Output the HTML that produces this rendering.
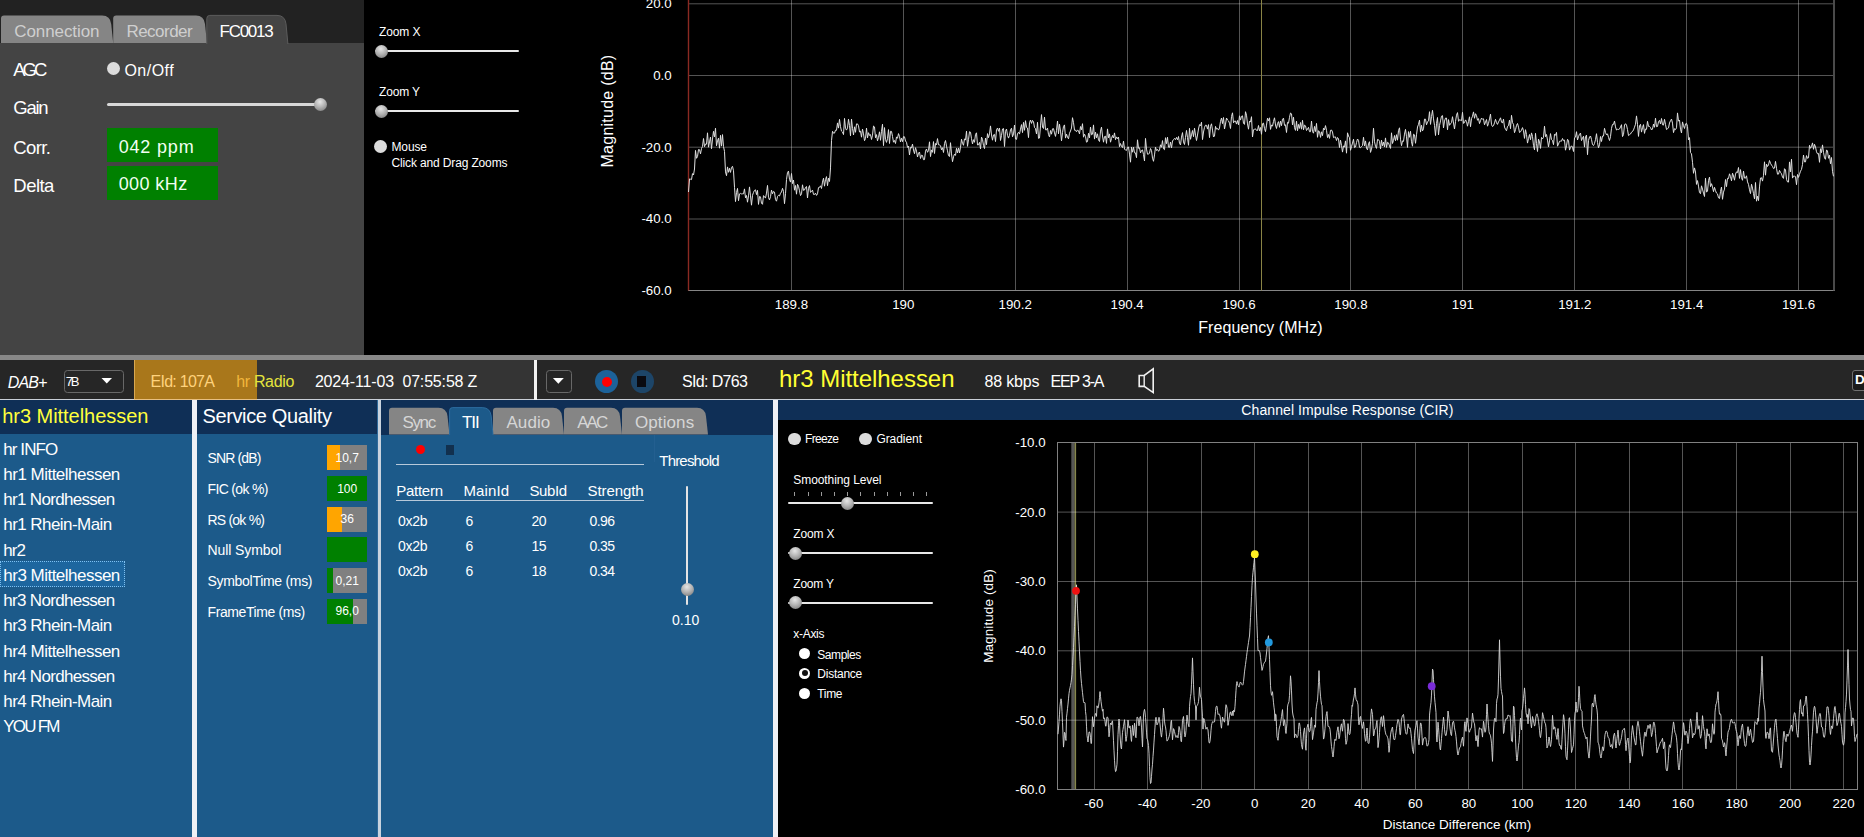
<!DOCTYPE html>
<html><head><meta charset="utf-8"><title>DAB Radio</title>
<style>
html,body{margin:0;padding:0;background:#000;}
html{overflow:hidden;width:1864px;height:837px;}
body{width:1864px;height:837px;position:relative;overflow:hidden;font-family:"Liberation Sans",sans-serif;}
#r{position:absolute;left:0;top:0;width:1864px;height:837px;overflow:hidden;background:#000;}
#r>div,#r>span,#r>svg{position:absolute;display:block;}
#r>span{white-space:nowrap;}
.dot{border-radius:50%;background:#dcdcdc;}
.thumb{border-radius:50%;background:radial-gradient(circle at 45% 30%,#e6e6e6 0%,#b4b4b4 45%,#6e6e6e 100%);}
</style></head><body><div id="r">
<div style="left:0px;top:0px;width:364px;height:43px;background:#222222;"></div>
<div style="left:0px;top:43px;width:364px;height:312px;background:#444444;"></div>
<svg style="left:0;top:10px" width="760" height="36" viewBox="0 10 760 36"><path d="M1 43 L1 18.6 Q1 15.6 4 15.6 L102.2 15.6 Q110.2 15.6 111.2 24.1 L113.2 43 Z" fill="#858585"/><path d="M113.2 43 L113.2 18.6 Q113.2 15.6 116.2 15.6 L196 15.6 Q204 15.6 205 24.1 L207 43 Z" fill="#858585"/><path d="M206.8 45 L206.8 18.4 Q206.8 15.4 209.8 15.4 L277 15.4 Q285 15.4 286 23.9 L288 45 Z" fill="#444444" stroke="#5c5c5c" stroke-width="1"/></svg>
<div style="left:206px;top:43.6px;width:83px;height:2px;background:#444444;"></div>
<span style="left:14.3px;top:20.60px;font-size:17px;line-height:22px;color:#cfcfcf;letter-spacing:-0.090px;">Connection</span>
<span style="left:126.4px;top:20.60px;font-size:17px;line-height:22px;color:#cfcfcf;letter-spacing:-0.517px;">Recorder</span>
<span style="left:219.6px;top:20.60px;font-size:17px;line-height:22px;color:#ffffff;letter-spacing:-1.296px;">FC0013</span>
<span style="left:13.3px;top:57.80px;font-size:18.5px;line-height:24px;color:#fff;letter-spacing:-3.045px;">AGC</span>
<div class="dot" style="left:107px;top:62px;width:13px;height:13px;"></div>
<span style="left:124.4px;top:60.10px;font-size:16px;line-height:21px;color:#fff;letter-spacing:0.493px;">On/Off</span>
<span style="left:13.3px;top:96.40px;font-size:18.5px;line-height:24px;color:#fff;letter-spacing:-1.293px;">Gain</span>
<div style="left:107px;top:103px;width:210px;height:3px;background:#d8d8d8;border-radius:2px;"></div>
<div class="thumb" style="left:313.5px;top:98px;width:13px;height:13px;"></div>
<span style="left:13.3px;top:135.60px;font-size:18.5px;line-height:24px;color:#fff;letter-spacing:-0.598px;">Corr.</span>
<div style="left:107px;top:128px;width:111px;height:34px;background:#008000;"></div>
<span style="left:118.7px;top:135.50px;font-size:18px;line-height:23px;color:#f2fff2;letter-spacing:0.825px;">042 ppm</span>
<span style="left:13.3px;top:173.60px;font-size:18.5px;line-height:24px;color:#fff;letter-spacing:-0.522px;">Delta</span>
<div style="left:107px;top:166px;width:111px;height:34px;background:#008000;"></div>
<span style="left:118.7px;top:173.30px;font-size:18px;line-height:23px;color:#f2fff2;letter-spacing:0.411px;">000 kHz</span>
<span style="left:379px;top:23.60px;font-size:12px;line-height:16px;color:#fff;letter-spacing:-0.103px;">Zoom X</span>
<div style="left:375px;top:50px;width:144px;height:2px;background:#e8e8e8;border-radius:1px;"></div>
<div class="thumb" style="left:374.5px;top:44.5px;width:13px;height:13px;"></div>
<span style="left:379px;top:83.80px;font-size:12px;line-height:16px;color:#fff;letter-spacing:-0.159px;">Zoom Y</span>
<div style="left:375px;top:110px;width:144px;height:2px;background:#e8e8e8;border-radius:1px;"></div>
<div class="thumb" style="left:374.5px;top:104.5px;width:13px;height:13px;"></div>
<div class="dot" style="left:374px;top:139.5px;width:13px;height:13px;"></div>
<span style="left:391.5px;top:139.00px;font-size:12px;line-height:16px;color:#fff;letter-spacing:-0.130px;">Mouse</span>
<span style="left:391.5px;top:155.30px;font-size:12px;line-height:16px;color:#fff;letter-spacing:-0.143px;">Click and Drag Zooms</span>
<svg style="left:0;top:0" width="1864" height="356" viewBox="0 0 1864 356">
<line x1="688" x2="1834.5" y1="3.8" y2="3.8" stroke="#ffffff" stroke-opacity="0.33" stroke-width="1"/>
<line x1="688" x2="1834.5" y1="75.5" y2="75.5" stroke="#ffffff" stroke-opacity="0.33" stroke-width="1"/>
<line x1="688" x2="1834.5" y1="147.2" y2="147.2" stroke="#ffffff" stroke-opacity="0.33" stroke-width="1"/>
<line x1="688" x2="1834.5" y1="219.0" y2="219.0" stroke="#ffffff" stroke-opacity="0.33" stroke-width="1"/>
<line x1="791.5" x2="791.5" y1="0" y2="290.3" stroke="#ffffff" stroke-opacity="0.33" stroke-width="1"/>
<line x1="903.5" x2="903.5" y1="0" y2="290.3" stroke="#ffffff" stroke-opacity="0.33" stroke-width="1"/>
<line x1="1015.5" x2="1015.5" y1="0" y2="290.3" stroke="#ffffff" stroke-opacity="0.33" stroke-width="1"/>
<line x1="1127.5" x2="1127.5" y1="0" y2="290.3" stroke="#ffffff" stroke-opacity="0.33" stroke-width="1"/>
<line x1="1239.5" x2="1239.5" y1="0" y2="290.3" stroke="#ffffff" stroke-opacity="0.33" stroke-width="1"/>
<line x1="1350.5" x2="1350.5" y1="0" y2="290.3" stroke="#ffffff" stroke-opacity="0.33" stroke-width="1"/>
<line x1="1462.5" x2="1462.5" y1="0" y2="290.3" stroke="#ffffff" stroke-opacity="0.33" stroke-width="1"/>
<line x1="1574.5" x2="1574.5" y1="0" y2="290.3" stroke="#ffffff" stroke-opacity="0.33" stroke-width="1"/>
<line x1="1686.5" x2="1686.5" y1="0" y2="290.3" stroke="#ffffff" stroke-opacity="0.33" stroke-width="1"/>
<line x1="1798.5" x2="1798.5" y1="0" y2="290.3" stroke="#ffffff" stroke-opacity="0.33" stroke-width="1"/>
<line x1="688" x2="1835.0" y1="290.5" y2="290.5" stroke="#858585" stroke-width="1"/>
<line x1="1834" x2="1834" y1="0" y2="290.5" stroke="#4a4a4a" stroke-width="2"/>
<line x1="688.5" x2="688.5" y1="0" y2="290.5" stroke="#8a2a22" stroke-width="1.4"/>
<line x1="1261.5" x2="1261.5" y1="0" y2="290.5" stroke="#8a8446" stroke-width="1"/>
<polyline points="688.5,192.0 689.5,178.9 690.5,179.2 691.5,179.6 692.5,173.6 693.5,175.0 694.5,169.0 695.5,150.4 696.5,158.3 697.5,156.6 698.5,149.5 699.5,149.7 700.5,153.9 701.5,148.5 702.5,146.5 703.5,138.5 704.5,146.7 705.5,144.0 706.5,144.2 707.5,132.8 708.5,147.2 709.5,141.9 710.5,137.0 711.5,148.7 712.5,139.1 713.5,131.3 714.5,136.9 715.5,128.2 716.5,145.8 717.5,140.8 718.5,138.1 719.5,148.2 720.5,135.3 721.5,146.1 722.5,134.6 723.5,146.5 724.5,151.4 725.5,171.9 726.5,175.7 727.5,166.9 728.5,172.3 729.5,168.3 730.5,172.4 731.5,167.4 732.5,166.3 733.5,170.8 734.5,187.3 735.5,201.6 736.5,192.6 737.5,188.4 738.5,200.7 739.5,193.9 740.5,193.4 741.5,193.9 742.5,193.8 743.5,193.8 744.5,188.9 745.5,197.9 746.5,195.5 747.5,202.2 748.5,195.9 749.5,186.9 750.5,195.9 751.5,205.2 752.5,195.3 753.5,192.4 754.5,190.4 755.5,189.8 756.5,194.6 757.5,190.4 758.5,204.4 759.5,196.5 760.5,196.8 761.5,203.3 762.5,204.3 763.5,195.6 764.5,196.8 765.5,198.1 766.5,193.1 767.5,185.4 768.5,197.6 769.5,199.9 770.5,196.7 771.5,190.1 772.5,193.8 773.5,191.4 774.5,192.1 775.5,199.6 776.5,201.2 777.5,196.5 778.5,195.3 779.5,196.0 780.5,193.2 781.5,192.0 782.5,188.3 783.5,191.4 784.5,203.7 785.5,193.7 786.5,179.5 787.5,172.4 788.5,171.1 789.5,179.4 790.5,182.1 791.5,173.5 792.5,183.6 793.5,180.0 794.5,190.2 795.5,185.5 796.5,194.2 797.5,184.3 798.5,186.3 799.5,190.8 800.5,195.6 801.5,193.8 802.5,184.8 803.5,190.4 804.5,190.0 805.5,187.4 806.5,186.5 807.5,198.0 808.5,188.3 809.5,185.6 810.5,192.4 811.5,191.5 812.5,190.1 813.5,194.4 814.5,194.5 815.5,193.1 816.5,195.4 817.5,193.8 818.5,187.6 819.5,187.4 820.5,185.8 821.5,188.5 822.5,182.1 823.5,178.2 824.5,186.2 825.5,179.7 826.5,176.6 827.5,185.7 828.5,178.1 829.5,181.5 830.5,167.9 831.5,140.6 832.5,131.3 833.5,133.2 834.5,133.1 835.5,130.2 836.5,130.3 837.5,122.9 838.5,128.1 839.5,119.4 840.5,126.7 841.5,131.1 842.5,132.0 843.5,134.6 844.5,118.4 845.5,128.4 846.5,130.1 847.5,127.9 848.5,119.2 849.5,125.5 850.5,135.8 851.5,119.0 852.5,128.4 853.5,135.0 854.5,126.8 855.5,132.3 856.5,123.9 857.5,123.9 858.5,125.8 859.5,132.0 860.5,131.1 861.5,137.2 862.5,129.1 863.5,133.9 864.5,140.7 865.5,138.5 866.5,128.1 867.5,137.9 868.5,132.7 869.5,135.4 870.5,134.6 871.5,139.5 872.5,135.2 873.5,126.0 874.5,126.9 875.5,137.8 876.5,134.6 877.5,140.9 878.5,137.3 879.5,131.8 880.5,140.3 881.5,131.3 882.5,124.2 883.5,145.6 884.5,127.6 885.5,139.4 886.5,142.4 887.5,138.6 888.5,129.6 889.5,143.5 890.5,131.3 891.5,131.4 892.5,136.4 893.5,142.2 894.5,140.5 895.5,143.5 896.5,136.9 897.5,138.3 898.5,133.6 899.5,136.5 900.5,142.0 901.5,138.1 902.5,141.7 903.5,136.6 904.5,136.8 905.5,141.0 906.5,142.3 907.5,147.4 908.5,146.0 909.5,155.0 910.5,147.3 911.5,148.0 912.5,144.1 913.5,150.0 914.5,153.7 915.5,147.7 916.5,151.1 917.5,157.0 918.5,153.1 919.5,152.0 920.5,158.5 921.5,155.2 922.5,155.5 923.5,159.7 924.5,159.6 925.5,151.2 926.5,149.0 927.5,152.3 928.5,150.5 929.5,141.8 930.5,156.6 931.5,149.9 932.5,152.3 933.5,141.6 934.5,153.5 935.5,143.5 936.5,144.9 937.5,138.6 938.5,144.8 939.5,145.0 940.5,145.7 941.5,149.9 942.5,147.7 943.5,152.5 944.5,143.5 945.5,140.5 946.5,146.2 947.5,150.8 948.5,155.7 949.5,156.5 950.5,142.7 951.5,153.9 952.5,161.7 953.5,156.8 954.5,154.1 955.5,155.4 956.5,148.3 957.5,152.9 958.5,148.0 959.5,152.9 960.5,147.2 961.5,139.2 962.5,143.3 963.5,145.3 964.5,138.8 965.5,140.1 966.5,131.1 967.5,146.3 968.5,139.7 969.5,131.7 970.5,132.2 971.5,138.7 972.5,144.0 973.5,139.7 974.5,142.3 975.5,134.4 976.5,132.8 977.5,145.0 978.5,144.8 979.5,142.4 980.5,149.0 981.5,137.1 982.5,139.3 983.5,145.6 984.5,148.6 985.5,138.0 986.5,144.7 987.5,133.6 988.5,137.7 989.5,133.9 990.5,125.9 991.5,135.0 992.5,140.2 993.5,134.9 994.5,134.4 995.5,141.6 996.5,129.7 997.5,128.1 998.5,131.3 999.5,128.0 1000.5,140.5 1001.5,135.4 1002.5,129.0 1003.5,128.5 1004.5,146.5 1005.5,131.3 1006.5,129.0 1007.5,135.3 1008.5,138.1 1009.5,135.3 1010.5,129.9 1011.5,128.2 1012.5,136.8 1013.5,133.9 1014.5,125.0 1015.5,139.0 1016.5,139.4 1017.5,133.5 1018.5,132.3 1019.5,134.1 1020.5,129.1 1021.5,124.6 1022.5,132.6 1023.5,122.4 1024.5,130.3 1025.5,120.7 1026.5,127.4 1027.5,128.0 1028.5,137.6 1029.5,122.8 1030.5,120.0 1031.5,123.4 1032.5,120.4 1033.5,121.8 1034.5,127.5 1035.5,128.6 1036.5,133.9 1037.5,122.3 1038.5,138.4 1039.5,138.0 1040.5,125.9 1041.5,114.6 1042.5,127.0 1043.5,128.5 1044.5,117.1 1045.5,129.8 1046.5,130.0 1047.5,128.0 1048.5,134.6 1049.5,136.9 1050.5,130.5 1051.5,134.2 1052.5,128.8 1053.5,128.6 1054.5,132.9 1055.5,136.4 1056.5,130.5 1057.5,121.0 1058.5,133.8 1059.5,124.2 1060.5,131.1 1061.5,140.8 1062.5,132.7 1063.5,126.4 1064.5,124.9 1065.5,138.1 1066.5,134.1 1067.5,137.1 1068.5,138.8 1069.5,133.3 1070.5,131.0 1071.5,128.0 1072.5,117.7 1073.5,122.7 1074.5,130.2 1075.5,130.2 1076.5,131.8 1077.5,129.9 1078.5,130.9 1079.5,133.9 1080.5,126.5 1081.5,129.8 1082.5,123.7 1083.5,137.2 1084.5,134.2 1085.5,136.4 1086.5,142.2 1087.5,141.6 1088.5,133.3 1089.5,137.9 1090.5,127.0 1091.5,134.8 1092.5,134.2 1093.5,124.9 1094.5,139.1 1095.5,132.1 1096.5,137.8 1097.5,133.8 1098.5,139.9 1099.5,141.5 1100.5,131.1 1101.5,127.1 1102.5,136.0 1103.5,142.2 1104.5,136.6 1105.5,136.2 1106.5,143.4 1107.5,128.9 1108.5,137.8 1109.5,133.9 1110.5,142.2 1111.5,138.5 1112.5,135.4 1113.5,138.0 1114.5,132.9 1115.5,139.7 1116.5,136.9 1117.5,138.7 1118.5,137.0 1119.5,146.7 1120.5,143.5 1121.5,146.5 1122.5,147.6 1123.5,141.1 1124.5,149.3 1125.5,149.9 1126.5,150.4 1127.5,147.5 1128.5,147.0 1129.5,154.1 1130.5,162.2 1131.5,147.1 1132.5,152.2 1133.5,147.2 1134.5,152.8 1135.5,152.9 1136.5,157.7 1137.5,139.8 1138.5,148.3 1139.5,147.8 1140.5,152.9 1141.5,150.5 1142.5,149.9 1143.5,154.5 1144.5,161.0 1145.5,138.4 1146.5,149.1 1147.5,154.2 1148.5,154.2 1149.5,153.0 1150.5,148.5 1151.5,150.5 1152.5,158.2 1153.5,161.3 1154.5,154.9 1155.5,147.2 1156.5,150.5 1157.5,149.4 1158.5,151.3 1159.5,149.9 1160.5,144.8 1161.5,147.3 1162.5,140.6 1163.5,148.8 1164.5,149.7 1165.5,137.7 1166.5,143.7 1167.5,137.2 1168.5,147.2 1169.5,147.4 1170.5,142.0 1171.5,147.9 1172.5,141.0 1173.5,139.7 1174.5,138.4 1175.5,139.6 1176.5,137.4 1177.5,139.8 1178.5,136.5 1179.5,143.4 1180.5,144.9 1181.5,137.1 1182.5,132.6 1183.5,141.9 1184.5,144.5 1185.5,137.3 1186.5,130.4 1187.5,137.5 1188.5,145.3 1189.5,128.3 1190.5,139.3 1191.5,134.9 1192.5,130.5 1193.5,136.7 1194.5,128.2 1195.5,135.2 1196.5,140.5 1197.5,135.0 1198.5,129.0 1199.5,124.6 1200.5,125.8 1201.5,122.2 1202.5,139.6 1203.5,132.0 1204.5,127.3 1205.5,125.2 1206.5,125.3 1207.5,129.1 1208.5,124.6 1209.5,137.6 1210.5,126.5 1211.5,123.8 1212.5,130.1 1213.5,137.0 1214.5,136.0 1215.5,126.4 1216.5,129.1 1217.5,128.5 1218.5,130.1 1219.5,128.0 1220.5,121.3 1221.5,118.0 1222.5,123.6 1223.5,117.5 1224.5,129.0 1225.5,124.1 1226.5,118.0 1227.5,120.0 1228.5,120.9 1229.5,123.2 1230.5,128.5 1231.5,116.5 1232.5,112.8 1233.5,122.8 1234.5,121.1 1235.5,121.0 1236.5,124.1 1237.5,120.5 1238.5,124.8 1239.5,115.8 1240.5,120.1 1241.5,116.3 1242.5,115.8 1243.5,123.3 1244.5,124.4 1245.5,111.7 1246.5,115.2 1247.5,123.9 1248.5,129.2 1249.5,121.1 1250.5,122.1 1251.5,116.7 1252.5,137.0 1253.5,129.7 1254.5,129.3 1255.5,128.8 1256.5,130.4 1257.5,130.5 1258.5,125.5 1259.5,131.0 1260.5,127.5 1261.5,134.3 1262.5,123.7 1263.5,123.1 1264.5,128.4 1265.5,131.7 1266.5,125.1 1267.5,118.2 1268.5,120.9 1269.5,117.8 1270.5,129.4 1271.5,124.9 1272.5,126.2 1273.5,121.4 1274.5,117.8 1275.5,125.0 1276.5,128.5 1277.5,123.6 1278.5,121.6 1279.5,127.3 1280.5,121.1 1281.5,125.7 1282.5,119.2 1283.5,118.2 1284.5,125.4 1285.5,124.8 1286.5,132.5 1287.5,122.3 1288.5,123.2 1289.5,117.3 1290.5,113.0 1291.5,113.8 1292.5,124.9 1293.5,117.2 1294.5,127.6 1295.5,130.4 1296.5,121.2 1297.5,130.8 1298.5,124.4 1299.5,128.4 1300.5,122.5 1301.5,129.2 1302.5,120.3 1303.5,129.9 1304.5,125.1 1305.5,125.8 1306.5,130.5 1307.5,129.1 1308.5,127.3 1309.5,131.7 1310.5,131.7 1311.5,121.0 1312.5,131.5 1313.5,133.2 1314.5,126.4 1315.5,131.5 1316.5,123.4 1317.5,137.3 1318.5,130.8 1319.5,131.6 1320.5,137.4 1321.5,131.8 1322.5,135.7 1323.5,128.2 1324.5,129.9 1325.5,125.6 1326.5,130.3 1327.5,137.6 1328.5,134.5 1329.5,138.4 1330.5,130.3 1331.5,130.0 1332.5,132.0 1333.5,137.6 1334.5,137.1 1335.5,136.9 1336.5,140.5 1337.5,137.5 1338.5,138.8 1339.5,147.5 1340.5,140.2 1341.5,145.4 1342.5,152.1 1343.5,145.8 1344.5,147.2 1345.5,140.9 1346.5,153.2 1347.5,132.8 1348.5,136.0 1349.5,137.8 1350.5,150.3 1351.5,146.6 1352.5,143.1 1353.5,139.2 1354.5,147.6 1355.5,147.0 1356.5,142.5 1357.5,139.0 1358.5,140.3 1359.5,147.3 1360.5,147.7 1361.5,146.5 1362.5,145.5 1363.5,137.2 1364.5,146.0 1365.5,140.9 1366.5,148.1 1367.5,149.9 1368.5,143.9 1369.5,141.7 1370.5,152.4 1371.5,149.1 1372.5,143.3 1373.5,128.2 1374.5,141.8 1375.5,146.3 1376.5,148.4 1377.5,139.4 1378.5,139.7 1379.5,141.3 1380.5,148.9 1381.5,140.2 1382.5,145.8 1383.5,142.1 1384.5,146.8 1385.5,137.9 1386.5,147.4 1387.5,142.3 1388.5,142.9 1389.5,146.0 1390.5,148.4 1391.5,132.8 1392.5,143.5 1393.5,140.4 1394.5,135.5 1395.5,140.7 1396.5,134.7 1397.5,140.2 1398.5,130.6 1399.5,127.8 1400.5,139.2 1401.5,145.7 1402.5,140.9 1403.5,141.4 1404.5,134.1 1405.5,129.4 1406.5,136.8 1407.5,147.4 1408.5,131.6 1409.5,137.3 1410.5,131.3 1411.5,141.8 1412.5,146.2 1413.5,134.2 1414.5,134.8 1415.5,143.3 1416.5,134.8 1417.5,127.0 1418.5,124.3 1419.5,120.1 1420.5,132.1 1421.5,125.2 1422.5,130.9 1423.5,128.8 1424.5,119.1 1425.5,119.2 1426.5,124.8 1427.5,121.9 1428.5,120.9 1429.5,111.7 1430.5,124.4 1431.5,116.6 1432.5,110.3 1433.5,118.9 1434.5,125.4 1435.5,135.5 1436.5,123.6 1437.5,117.5 1438.5,134.9 1439.5,125.6 1440.5,120.9 1441.5,116.2 1442.5,115.6 1443.5,127.9 1444.5,121.1 1445.5,118.1 1446.5,118.0 1447.5,129.8 1448.5,119.6 1449.5,125.3 1450.5,123.8 1451.5,122.7 1452.5,116.7 1453.5,123.0 1454.5,129.0 1455.5,121.5 1456.5,115.2 1457.5,112.6 1458.5,121.3 1459.5,119.7 1460.5,120.2 1461.5,120.7 1462.5,112.3 1463.5,123.4 1464.5,122.7 1465.5,119.9 1466.5,121.4 1467.5,126.2 1468.5,121.6 1469.5,116.8 1470.5,126.7 1471.5,118.7 1472.5,116.2 1473.5,111.9 1474.5,118.3 1475.5,113.7 1476.5,115.6 1477.5,120.3 1478.5,118.6 1479.5,123.6 1480.5,120.7 1481.5,118.1 1482.5,119.2 1483.5,118.8 1484.5,124.8 1485.5,122.1 1486.5,119.5 1487.5,126.2 1488.5,123.4 1489.5,118.9 1490.5,114.1 1491.5,124.7 1492.5,126.5 1493.5,125.7 1494.5,122.9 1495.5,119.3 1496.5,122.7 1497.5,124.4 1498.5,121.9 1499.5,120.1 1500.5,117.8 1501.5,122.0 1502.5,123.1 1503.5,119.1 1504.5,127.1 1505.5,129.3 1506.5,130.8 1507.5,126.3 1508.5,125.7 1509.5,120.1 1510.5,128.7 1511.5,115.3 1512.5,122.7 1513.5,124.3 1514.5,132.7 1515.5,129.7 1516.5,125.4 1517.5,123.5 1518.5,127.2 1519.5,132.5 1520.5,131.8 1521.5,130.1 1522.5,127.6 1523.5,130.9 1524.5,138.4 1525.5,129.7 1526.5,134.5 1527.5,143.1 1528.5,138.6 1529.5,134.5 1530.5,139.8 1531.5,132.9 1532.5,136.4 1533.5,145.6 1534.5,149.8 1535.5,133.3 1536.5,143.6 1537.5,151.5 1538.5,139.1 1539.5,141.9 1540.5,148.4 1541.5,137.4 1542.5,138.9 1543.5,137.3 1544.5,126.2 1545.5,136.7 1546.5,134.5 1547.5,140.1 1548.5,146.8 1549.5,140.9 1550.5,133.6 1551.5,139.6 1552.5,140.5 1553.5,144.7 1554.5,134.3 1555.5,135.3 1556.5,132.4 1557.5,146.2 1558.5,144.1 1559.5,141.3 1560.5,141.1 1561.5,141.2 1562.5,138.5 1563.5,140.7 1564.5,140.1 1565.5,150.2 1566.5,145.8 1567.5,139.3 1568.5,140.4 1569.5,150.1 1570.5,147.3 1571.5,145.8 1572.5,147.2 1573.5,151.5 1574.5,137.8 1575.5,137.2 1576.5,131.7 1577.5,140.0 1578.5,136.7 1579.5,134.2 1580.5,133.1 1581.5,140.6 1582.5,138.1 1583.5,136.2 1584.5,147.1 1585.5,136.6 1586.5,135.1 1587.5,154.7 1588.5,140.5 1589.5,137.0 1590.5,136.0 1591.5,139.5 1592.5,144.6 1593.5,145.5 1594.5,143.5 1595.5,139.7 1596.5,133.7 1597.5,142.4 1598.5,147.8 1599.5,144.8 1600.5,136.5 1601.5,141.5 1602.5,136.0 1603.5,136.1 1604.5,128.3 1605.5,132.4 1606.5,134.9 1607.5,133.8 1608.5,137.4 1609.5,140.5 1610.5,136.7 1611.5,128.3 1612.5,124.4 1613.5,124.4 1614.5,121.1 1615.5,126.9 1616.5,130.0 1617.5,129.3 1618.5,129.5 1619.5,129.0 1620.5,127.0 1621.5,124.7 1622.5,136.6 1623.5,134.6 1624.5,125.0 1625.5,123.7 1626.5,125.1 1627.5,129.6 1628.5,135.6 1629.5,134.7 1630.5,134.0 1631.5,132.2 1632.5,131.5 1633.5,129.9 1634.5,127.2 1635.5,124.2 1636.5,115.9 1637.5,124.3 1638.5,136.4 1639.5,125.8 1640.5,124.3 1641.5,132.1 1642.5,127.6 1643.5,124.6 1644.5,133.4 1645.5,129.0 1646.5,129.3 1647.5,121.3 1648.5,126.4 1649.5,126.4 1650.5,127.6 1651.5,130.0 1652.5,129.0 1653.5,124.0 1654.5,127.3 1655.5,118.2 1656.5,126.7 1657.5,126.5 1658.5,121.7 1659.5,120.4 1660.5,124.0 1661.5,118.5 1662.5,124.8 1663.5,125.1 1664.5,119.3 1665.5,124.6 1666.5,129.5 1667.5,128.7 1668.5,127.9 1669.5,123.0 1670.5,120.7 1671.5,119.1 1672.5,123.1 1673.5,132.6 1674.5,128.7 1675.5,129.6 1676.5,127.8 1677.5,112.9 1678.5,121.2 1679.5,120.1 1680.5,129.2 1681.5,133.0 1682.5,121.9 1683.5,125.5 1684.5,128.5 1685.5,123.9 1686.5,123.3 1687.5,126.3 1688.5,140.0 1689.5,137.6 1690.5,152.6 1691.5,153.9 1692.5,162.3 1693.5,173.3 1694.5,167.9 1695.5,172.0 1696.5,184.4 1697.5,180.6 1698.5,186.1 1699.5,192.6 1700.5,193.7 1701.5,185.8 1702.5,189.1 1703.5,193.1 1704.5,196.5 1705.5,178.2 1706.5,192.0 1707.5,191.3 1708.5,180.6 1709.5,177.1 1710.5,186.7 1711.5,183.7 1712.5,186.9 1713.5,191.7 1714.5,187.3 1715.5,190.7 1716.5,193.1 1717.5,193.9 1718.5,197.8 1719.5,198.5 1720.5,191.5 1721.5,187.0 1722.5,199.3 1723.5,192.1 1724.5,189.1 1725.5,179.5 1726.5,186.7 1727.5,178.3 1728.5,178.6 1729.5,173.8 1730.5,176.6 1731.5,180.8 1732.5,173.2 1733.5,176.0 1734.5,180.2 1735.5,174.1 1736.5,171.9 1737.5,172.6 1738.5,167.5 1739.5,178.4 1740.5,169.6 1741.5,177.7 1742.5,180.3 1743.5,171.1 1744.5,178.1 1745.5,178.2 1746.5,175.8 1747.5,181.9 1748.5,184.4 1749.5,189.8 1750.5,193.6 1751.5,184.2 1752.5,188.1 1753.5,193.6 1754.5,198.9 1755.5,182.5 1756.5,201.2 1757.5,196.2 1758.5,200.6 1759.5,186.9 1760.5,178.0 1761.5,177.7 1762.5,181.1 1763.5,175.3 1764.5,161.8 1765.5,175.2 1766.5,164.1 1767.5,166.5 1768.5,164.9 1769.5,160.5 1770.5,163.3 1771.5,165.1 1772.5,166.4 1773.5,168.6 1774.5,168.1 1775.5,161.4 1776.5,168.3 1777.5,174.2 1778.5,174.1 1779.5,170.4 1780.5,172.4 1781.5,173.8 1782.5,177.1 1783.5,178.4 1784.5,168.7 1785.5,169.8 1786.5,179.3 1787.5,181.9 1788.5,182.1 1789.5,161.9 1790.5,171.9 1791.5,159.2 1792.5,178.1 1793.5,176.0 1794.5,176.2 1795.5,176.6 1796.5,184.7 1797.5,174.5 1798.5,177.4 1799.5,174.3 1800.5,171.2 1801.5,169.4 1802.5,164.5 1803.5,155.0 1804.5,161.9 1805.5,161.9 1806.5,155.6 1807.5,158.3 1808.5,157.8 1809.5,145.3 1810.5,148.3 1811.5,146.5 1812.5,142.9 1813.5,149.3 1814.5,144.3 1815.5,147.0 1816.5,151.8 1817.5,153.8 1818.5,153.5 1819.5,162.3 1820.5,148.7 1821.5,152.7 1822.5,144.9 1823.5,152.3 1824.5,157.9 1825.5,159.3 1826.5,149.9 1827.5,151.0 1828.5,158.3 1829.5,155.2 1830.5,163.8 1831.5,157.5 1832.5,171.4 1833.5,176.3" fill="none" stroke="#e0e0e0" stroke-width="1" stroke-linejoin="miter" stroke-miterlimit="3.5"/>
</svg>
<span style="right:1192.3px;top:-4.95px;font-size:13.3px;line-height:17px;color:#fff;">20.0</span>
<span style="right:1192.3px;top:66.80px;font-size:13.3px;line-height:17px;color:#fff;">0.0</span>
<span style="right:1192.3px;top:138.55px;font-size:13.3px;line-height:17px;color:#fff;">-20.0</span>
<span style="right:1192.3px;top:210.30px;font-size:13.3px;line-height:17px;color:#fff;">-40.0</span>
<span style="right:1192.3px;top:282.05px;font-size:13.3px;line-height:17px;color:#fff;">-60.0</span>
<span style="left:641.4px;width:300px;text-align:center;top:295.90px;font-size:13.3px;line-height:17px;color:#fff;">189.8</span>
<span style="left:753.31px;width:300px;text-align:center;top:295.90px;font-size:13.3px;line-height:17px;color:#fff;">190</span>
<span style="left:865.22px;width:300px;text-align:center;top:295.90px;font-size:13.3px;line-height:17px;color:#fff;">190.2</span>
<span style="left:977.1300000000001px;width:300px;text-align:center;top:295.90px;font-size:13.3px;line-height:17px;color:#fff;">190.4</span>
<span style="left:1089.04px;width:300px;text-align:center;top:295.90px;font-size:13.3px;line-height:17px;color:#fff;">190.6</span>
<span style="left:1200.9499999999998px;width:300px;text-align:center;top:295.90px;font-size:13.3px;line-height:17px;color:#fff;">190.8</span>
<span style="left:1312.8600000000001px;width:300px;text-align:center;top:295.90px;font-size:13.3px;line-height:17px;color:#fff;">191</span>
<span style="left:1424.77px;width:300px;text-align:center;top:295.90px;font-size:13.3px;line-height:17px;color:#fff;">191.2</span>
<span style="left:1536.6799999999998px;width:300px;text-align:center;top:295.90px;font-size:13.3px;line-height:17px;color:#fff;">191.4</span>
<span style="left:1648.59px;width:300px;text-align:center;top:295.90px;font-size:13.3px;line-height:17px;color:#fff;">191.6</span>
<span style="left:1198.3px;top:317.00px;font-size:16px;line-height:21px;color:#fff;letter-spacing:0.051px;">Frequency (MHz)</span>
<span style="left:457.5px;top:101px;width:300px;text-align:center;font-size:16px;letter-spacing:0.25px;line-height:20px;color:#fff;transform:rotate(-90deg);">Magnitude (dB)</span>
<div style="left:0px;top:355px;width:1864px;height:5px;background:#888888;"></div>
<div style="left:0px;top:360px;width:1864px;height:39px;background:#262626;"></div>
<div style="left:134px;top:360px;width:400px;height:39px;background:#343434;"></div>
<div style="left:134px;top:360px;width:123px;height:39px;background:#a9771b;"></div>
<div style="left:134px;top:360px;width:1px;height:39px;background:#d9a850;"></div>
<div style="left:0px;top:399px;width:1864px;height:1px;background:#c9ced6;"></div>
<div style="left:134px;top:399px;width:123px;height:1px;background:#e8bf80;"></div>
<div style="left:534px;top:360px;width:3px;height:40px;background:#f2f2f2;"></div>
<span style="left:7.8px;top:372.40px;font-size:16px;line-height:21px;color:#fff;letter-spacing:-0.915px;font-style:italic;">DAB+</span>
<div style="left:63.5px;top:370.2px;width:60px;height:22.6px;box-sizing:border-box;border:1.5px solid #686868;border-radius:3.5px;"></div>
<span style="left:65.8px;top:372.50px;font-size:13px;line-height:17px;color:#fff;letter-spacing:-2.202px;">7B</span>
<svg style="left:100px;top:375px" width="14" height="12"><path d="M1.5 3 L12 3 L6.75 8.6 Z" fill="#fff"/></svg>
<span style="left:150.5px;top:370.80px;font-size:16px;line-height:21px;color:#ffd27c;letter-spacing:-0.734px;">EId: 107A</span>
<span style="left:236.3px;top:370.80px;font-size:16px;line-height:21px;color:#e4e43c;letter-spacing:-0.354px;"><b style="font-weight:normal;color:#f2b63c">hr</b> Radio</span>
<span style="left:314.9px;top:370.80px;font-size:16px;line-height:21px;color:#fff;letter-spacing:-0.169px;">2024-11-03&nbsp; 07:55:58 Z</span>
<div style="left:546.3px;top:370.2px;width:25.5px;height:22.6px;box-sizing:border-box;border:1.5px solid #686868;border-radius:3.5px;"></div>
<svg style="left:552px;top:375px" width="14" height="12"><path d="M0.9 3 L11.8 3 L6.35 8.7 Z" fill="#fff"/></svg>
<div style="left:595px;top:370px;width:23px;height:23px;border-radius:50%;background:#1c629a;"></div>
<div style="left:601.5px;top:376.5px;width:10px;height:10px;border-radius:50%;background:#ff0000;"></div>
<div style="left:630.5px;top:370px;width:23px;height:23px;border-radius:50%;background:#1d4568;"></div>
<div style="left:637.3px;top:376.4px;width:9px;height:10.2px;background:#0a0a10;"></div>
<span style="left:682px;top:370.80px;font-size:16px;line-height:21px;color:#fff;letter-spacing:-0.645px;">SId: D763</span>
<span style="left:779px;top:363.20px;font-size:24px;line-height:31px;color:#ffff33;letter-spacing:-0.039px;">hr3 Mittelhessen</span>
<span style="left:984.6px;top:371.10px;font-size:16px;line-height:21px;color:#fff;letter-spacing:-0.190px;">88 kbps</span>
<span style="left:1050.5px;top:371.10px;font-size:16px;line-height:21px;color:#fff;letter-spacing:-1.179px;">EEP 3-A</span>
<svg style="left:1136px;top:366px" width="22" height="30" viewBox="0 0 22 30"><path d="M3.2 9.5 H8.2 L17.2 2.8 V26.6 L8.2 20.4 H3.2 Z" fill="none" stroke="#f0f0f0" stroke-width="1.6" stroke-linejoin="miter"/><line x1="8.2" y1="9.5" x2="8.2" y2="20.4" stroke="#f0f0f0" stroke-width="1.4"/></svg>
<div style="left:1852px;top:369.5px;width:20px;height:21.5px;box-sizing:border-box;border:1.3px solid #707070;border-radius:3px;background:#1c1c1c;"></div>
<span style="left:1855px;top:371.30px;font-size:13.5px;line-height:18px;color:#fff;font-weight:bold;">DA</span>
<div style="left:0px;top:400px;width:192px;height:34px;background:#0f2f56;"></div>
<div style="left:0px;top:434px;width:192px;height:403px;background:#1c5a8a;"></div>
<span style="left:2.2px;top:403.30px;font-size:20px;line-height:26px;color:#ffff3c;letter-spacing:-0.036px;">hr3 Mittelhessen</span>
<div style="left:0px;top:561px;width:125px;height:25.5px;box-sizing:border-box;background:#1d669f;border:1px dotted #7fc0f0;"></div>
<span style="left:3.3px;top:438.80px;font-size:17px;line-height:22px;color:#fff;letter-spacing:-0.924px;">hr INFO</span>
<span style="left:3.3px;top:464.02px;font-size:17px;line-height:22px;color:#fff;letter-spacing:-0.515px;">hr1 Mittelhessen</span>
<span style="left:3.3px;top:489.24px;font-size:17px;line-height:22px;color:#fff;letter-spacing:-0.689px;">hr1 Nordhessen</span>
<span style="left:3.3px;top:514.46px;font-size:17px;line-height:22px;color:#fff;letter-spacing:-0.563px;">hr1 Rhein-Main</span>
<span style="left:3.3px;top:539.68px;font-size:17px;line-height:22px;color:#fff;letter-spacing:-0.936px;">hr2</span>
<span style="left:3.3px;top:564.90px;font-size:17px;line-height:22px;color:#fff;letter-spacing:-0.515px;">hr3 Mittelhessen</span>
<span style="left:3.3px;top:590.12px;font-size:17px;line-height:22px;color:#fff;letter-spacing:-0.689px;">hr3 Nordhessen</span>
<span style="left:3.3px;top:615.34px;font-size:17px;line-height:22px;color:#fff;letter-spacing:-0.563px;">hr3 Rhein-Main</span>
<span style="left:3.3px;top:640.56px;font-size:17px;line-height:22px;color:#fff;letter-spacing:-0.515px;">hr4 Mittelhessen</span>
<span style="left:3.3px;top:665.78px;font-size:17px;line-height:22px;color:#fff;letter-spacing:-0.689px;">hr4 Nordhessen</span>
<span style="left:3.3px;top:691.00px;font-size:17px;line-height:22px;color:#fff;letter-spacing:-0.563px;">hr4 Rhein-Main</span>
<span style="left:3.3px;top:716.22px;font-size:17px;line-height:22px;color:#fff;letter-spacing:-1.782px;">YOU FM</span>
<div style="left:192px;top:400px;width:5px;height:437px;background:#eef0f5;"></div>
<div style="left:197px;top:400px;width:181px;height:34px;background:#0f2f56;"></div>
<div style="left:197px;top:434px;width:181px;height:403px;background:#1c5a8a;"></div>
<div style="left:377px;top:400px;width:1px;height:437px;background:#2f6a9a;"></div>
<span style="left:202.4px;top:403.30px;font-size:20px;line-height:26px;color:#fff;letter-spacing:-0.350px;">Service Quality</span>
<span style="left:207.5px;top:449.20px;font-size:14px;line-height:18px;color:#fff;letter-spacing:-0.857px;">SNR (dB)</span>
<div style="left:327px;top:445.4px;width:40.2px;height:25px;background:#808080;"></div>
<div style="left:327px;top:445.4px;width:12.7px;height:25px;background:#ffa500;"></div>
<span style="left:197.2px;width:300px;text-align:center;top:450.00px;font-size:12px;line-height:16px;color:#fff;">10,7</span>
<span style="left:207.5px;top:479.88px;font-size:14px;line-height:18px;color:#fff;letter-spacing:-0.654px;">FIC (ok %)</span>
<div style="left:327px;top:476.1px;width:40.2px;height:25px;background:#808080;"></div>
<div style="left:327px;top:476.1px;width:40.2px;height:25px;background:#008000;"></div>
<span style="left:197.2px;width:300px;text-align:center;top:480.68px;font-size:12px;line-height:16px;color:#fff;">100</span>
<span style="left:207.5px;top:510.56px;font-size:14px;line-height:18px;color:#fff;letter-spacing:-0.786px;">RS (ok %)</span>
<div style="left:327px;top:506.8px;width:40.2px;height:25px;background:#808080;"></div>
<div style="left:327px;top:506.8px;width:14.7px;height:25px;background:#ffa500;"></div>
<span style="left:197.2px;width:300px;text-align:center;top:511.36px;font-size:12px;line-height:16px;color:#fff;">36</span>
<span style="left:207.5px;top:541.24px;font-size:14px;line-height:18px;color:#fff;letter-spacing:-0.089px;">Null Symbol</span>
<div style="left:327px;top:537.4px;width:40.2px;height:25px;background:#808080;"></div>
<div style="left:327px;top:537.4px;width:40.2px;height:25px;background:#008000;"></div>
<span style="left:207.5px;top:571.92px;font-size:14px;line-height:18px;color:#fff;letter-spacing:-0.297px;">SymbolTime (ms)</span>
<div style="left:327px;top:568.1px;width:40.2px;height:25px;background:#808080;"></div>
<div style="left:327px;top:568.1px;width:5.7px;height:25px;background:#008000;"></div>
<span style="left:197.2px;width:300px;text-align:center;top:572.72px;font-size:12px;line-height:16px;color:#fff;">0,21</span>
<span style="left:207.5px;top:602.60px;font-size:14px;line-height:18px;color:#fff;letter-spacing:-0.402px;">FrameTime (ms)</span>
<div style="left:327px;top:598.8px;width:40.2px;height:25px;background:#808080;"></div>
<div style="left:327px;top:598.8px;width:25.7px;height:25px;background:#008000;"></div>
<span style="left:197.2px;width:300px;text-align:center;top:603.40px;font-size:12px;line-height:16px;color:#fff;">96,0</span>
<div style="left:378px;top:400px;width:3px;height:437px;background:#c9d3de;"></div>
<div style="left:381px;top:400px;width:392px;height:35px;background:#0f2f56;"></div>
<div style="left:381px;top:434.5px;width:392px;height:402.5px;background:#1c5a8a;"></div>
<svg style="left:0;top:402px" width="760" height="36" viewBox="0 402 760 36"><path d="M389 434.6 L389 410.8 Q389 407.8 392 407.8 L438.5 407.8 Q446.5 407.8 447.5 416.3 L449.5 434.6 Z" fill="#858585"/><path d="M493 434.6 L493 410.8 Q493 407.8 496 407.8 L553 407.8 Q561 407.8 562 416.3 L564 434.6 Z" fill="#858585"/><path d="M564 434.6 L564 410.8 Q564 407.8 567 407.8 L611 407.8 Q619 407.8 620 416.3 L622 434.6 Z" fill="#858585"/><path d="M622 434.6 L622 410.8 Q622 407.8 625 407.8 L697 407.8 Q705 407.8 706 416.3 L708 434.6 Z" fill="#858585"/><path d="M449.6 436.5 L449.6 410.6 Q449.6 407.6 452.6 407.6 L482.2 407.6 Q490.2 407.6 491.2 416.1 L493.2 436.5 Z" fill="#1c5a8a" stroke="#2c6c9f" stroke-width="1"/></svg>
<div style="left:448px;top:435px;width:47px;height:2px;background:#1c5a8a;"></div>
<span style="left:402.4px;top:412.00px;font-size:17px;line-height:22px;color:#d6d6d6;letter-spacing:-1.331px;">Sync</span>
<span style="left:462px;top:412.00px;font-size:17px;line-height:22px;color:#fff;letter-spacing:-1.015px;">TII</span>
<span style="left:506.4px;top:412.00px;font-size:17px;line-height:22px;color:#d6d6d6;letter-spacing:0.105px;">Audio</span>
<span style="left:577.3px;top:412.00px;font-size:17px;line-height:22px;color:#d6d6d6;letter-spacing:-2.028px;">AAC</span>
<span style="left:634.9px;top:412.00px;font-size:17px;line-height:22px;color:#d6d6d6;letter-spacing:0.119px;">Options</span>
<div style="left:416px;top:445px;width:9px;height:9px;border-radius:50%;background:#ff0000;"></div>
<div style="left:445.5px;top:445px;width:8.5px;height:9.5px;background:#12304e;"></div>
<div style="left:396px;top:464.3px;width:248px;height:1px;background:#b7c9da;"></div>
<div style="left:653.5px;top:435px;width:1px;height:27px;background:#235f90;"></div>
<span style="left:659.3px;top:451.00px;font-size:15px;line-height:20px;color:#fff;letter-spacing:-0.813px;">Threshold</span>
<span style="left:396.2px;top:481.00px;font-size:15px;line-height:20px;color:#fff;letter-spacing:-0.261px;">Pattern</span>
<span style="left:463.4px;top:481.00px;font-size:15px;line-height:20px;color:#fff;letter-spacing:0.155px;">MainId</span>
<span style="left:529.4px;top:481.00px;font-size:15px;line-height:20px;color:#fff;letter-spacing:-0.400px;">SubId</span>
<span style="left:587.6px;top:481.00px;font-size:15px;line-height:20px;color:#fff;letter-spacing:-0.087px;">Strength</span>
<div style="left:396px;top:500.2px;width:248px;height:1px;background:#b7c9da;"></div>
<span style="left:398px;top:512.30px;font-size:14px;line-height:18px;color:#fff;letter-spacing:-0.286px;">0x2b</span>
<span style="left:465.4px;top:512.30px;font-size:14px;line-height:18px;color:#fff;">6</span>
<span style="left:531.4px;top:512.30px;font-size:14px;line-height:18px;color:#fff;letter-spacing:-0.473px;">20</span>
<span style="left:589.6px;top:512.30px;font-size:14px;line-height:18px;color:#fff;letter-spacing:-0.616px;">0.96</span>
<span style="left:398px;top:537.25px;font-size:14px;line-height:18px;color:#fff;letter-spacing:-0.286px;">0x2b</span>
<span style="left:465.4px;top:537.25px;font-size:14px;line-height:18px;color:#fff;">6</span>
<span style="left:531.4px;top:537.25px;font-size:14px;line-height:18px;color:#fff;letter-spacing:-0.473px;">15</span>
<span style="left:589.6px;top:537.25px;font-size:14px;line-height:18px;color:#fff;letter-spacing:-0.616px;">0.35</span>
<span style="left:398px;top:562.20px;font-size:14px;line-height:18px;color:#fff;letter-spacing:-0.286px;">0x2b</span>
<span style="left:465.4px;top:562.20px;font-size:14px;line-height:18px;color:#fff;">6</span>
<span style="left:531.4px;top:562.20px;font-size:14px;line-height:18px;color:#fff;letter-spacing:-0.473px;">18</span>
<span style="left:589.6px;top:562.20px;font-size:14px;line-height:18px;color:#fff;letter-spacing:-0.616px;">0.34</span>
<div style="left:685.7px;top:485.5px;width:2.6px;height:119.5px;background:#e4e4e4;border-radius:1px;"></div>
<div class="thumb" style="left:680.5px;top:582.7px;width:13px;height:13px;"></div>
<span style="left:535.6px;width:300px;text-align:center;top:611.00px;font-size:14px;line-height:18px;color:#fff;">0.10</span>
<div style="left:773px;top:400px;width:5px;height:437px;background:#eef0f5;"></div>
<div style="left:778px;top:400px;width:1086px;height:20px;background:#0f2f56;"></div>
<span style="left:1241.3px;top:400.60px;font-size:14px;line-height:18px;color:#fff;letter-spacing:0.096px;">Channel Impulse Response (CIR)</span>
<div class="dot" style="left:788px;top:432.5px;width:12.5px;height:12.5px;"></div>
<span style="left:805px;top:430.80px;font-size:12px;line-height:16px;color:#fff;letter-spacing:-0.670px;">Freeze</span>
<div class="dot" style="left:859.3px;top:432.5px;width:12.5px;height:12.5px;"></div>
<span style="left:876.4px;top:430.80px;font-size:12px;line-height:16px;color:#fff;letter-spacing:-0.061px;">Gradient</span>
<span style="left:793.3px;top:471.80px;font-size:12px;line-height:16px;color:#fff;letter-spacing:-0.085px;">Smoothing Level</span>
<div style="left:794px;top:492px;width:1px;height:4px;background:#9a9a9a;"></div>
<div style="left:808px;top:492px;width:1px;height:4px;background:#9a9a9a;"></div>
<div style="left:821px;top:492px;width:1px;height:4px;background:#9a9a9a;"></div>
<div style="left:834px;top:492px;width:1px;height:4px;background:#9a9a9a;"></div>
<div style="left:847px;top:492px;width:1px;height:4px;background:#9a9a9a;"></div>
<div style="left:860px;top:492px;width:1px;height:4px;background:#9a9a9a;"></div>
<div style="left:874px;top:492px;width:1px;height:4px;background:#9a9a9a;"></div>
<div style="left:887px;top:492px;width:1px;height:4px;background:#9a9a9a;"></div>
<div style="left:900px;top:492px;width:1px;height:4px;background:#9a9a9a;"></div>
<div style="left:913px;top:492px;width:1px;height:4px;background:#9a9a9a;"></div>
<div style="left:926px;top:492px;width:1px;height:4px;background:#9a9a9a;"></div>
<div style="left:788px;top:502px;width:145px;height:2px;background:#e8e8e8;border-radius:1px;"></div>
<div class="thumb" style="left:840.5px;top:496.5px;width:13px;height:13px;"></div>
<span style="left:793.3px;top:526.00px;font-size:12px;line-height:16px;color:#fff;letter-spacing:-0.163px;">Zoom X</span>
<div style="left:788px;top:552px;width:145px;height:2px;background:#e8e8e8;border-radius:1px;"></div>
<div class="thumb" style="left:788.5px;top:546.5px;width:13px;height:13px;"></div>
<span style="left:793.3px;top:575.70px;font-size:12px;line-height:16px;color:#fff;letter-spacing:-0.219px;">Zoom Y</span>
<div style="left:788px;top:601.5px;width:145px;height:2px;background:#e8e8e8;border-radius:1px;"></div>
<div class="thumb" style="left:788.5px;top:596px;width:13px;height:13px;"></div>
<span style="left:793.3px;top:625.80px;font-size:12px;line-height:16px;color:#fff;letter-spacing:-0.293px;">x-Axis</span>
<div style="left:799.2px;top:647.9px;width:11px;height:11px;border-radius:50%;background:#fff;"></div>
<span style="left:817.3px;top:646.50px;font-size:12px;line-height:16px;color:#fff;letter-spacing:-0.448px;">Samples</span>
<div style="left:799.2px;top:667.8px;width:11px;height:11px;border-radius:50%;background:#fff;"></div>
<div style="left:801.7px;top:670.3px;width:6px;height:6px;border-radius:50%;background:#111;"></div>
<span style="left:817.3px;top:666.40px;font-size:12px;line-height:16px;color:#fff;letter-spacing:-0.241px;">Distance</span>
<div style="left:799.2px;top:687.7px;width:11px;height:11px;border-radius:50%;background:#fff;"></div>
<span style="left:817.3px;top:686.30px;font-size:12px;line-height:16px;color:#fff;letter-spacing:-0.341px;">Time</span>
<span style="left:839px;top:606px;width:300px;text-align:center;font-size:13.5px;letter-spacing:0.1px;line-height:20px;color:#fff;transform:rotate(-90deg);">Magnitude (dB)</span>
<svg style="left:0;top:420px" width="1864" height="417" viewBox="0 420 1864 417">
<rect x="1071.3" y="443" width="3.4" height="346" fill="#565656"/>
<rect x="1074.6" y="443" width="1.5" height="346" fill="#86864c"/>
<line x1="1057.5" x2="1857.5" y1="512.1" y2="512.1" stroke="#ffffff" stroke-opacity="0.33" stroke-width="1"/>
<line x1="1057.5" x2="1857.5" y1="581.5" y2="581.5" stroke="#ffffff" stroke-opacity="0.33" stroke-width="1"/>
<line x1="1057.5" x2="1857.5" y1="650.8" y2="650.8" stroke="#ffffff" stroke-opacity="0.33" stroke-width="1"/>
<line x1="1057.5" x2="1857.5" y1="720.2" y2="720.2" stroke="#ffffff" stroke-opacity="0.33" stroke-width="1"/>
<line x1="1094.5" x2="1094.5" y1="442.5" y2="789.5" stroke="#ffffff" stroke-opacity="0.33" stroke-width="1"/>
<line x1="1147.5" x2="1147.5" y1="442.5" y2="789.5" stroke="#ffffff" stroke-opacity="0.33" stroke-width="1"/>
<line x1="1201.5" x2="1201.5" y1="442.5" y2="789.5" stroke="#ffffff" stroke-opacity="0.33" stroke-width="1"/>
<line x1="1254.5" x2="1254.5" y1="442.5" y2="789.5" stroke="#ffffff" stroke-opacity="0.33" stroke-width="1"/>
<line x1="1308.5" x2="1308.5" y1="442.5" y2="789.5" stroke="#ffffff" stroke-opacity="0.33" stroke-width="1"/>
<line x1="1361.5" x2="1361.5" y1="442.5" y2="789.5" stroke="#ffffff" stroke-opacity="0.33" stroke-width="1"/>
<line x1="1415.5" x2="1415.5" y1="442.5" y2="789.5" stroke="#ffffff" stroke-opacity="0.33" stroke-width="1"/>
<line x1="1468.5" x2="1468.5" y1="442.5" y2="789.5" stroke="#ffffff" stroke-opacity="0.33" stroke-width="1"/>
<line x1="1522.5" x2="1522.5" y1="442.5" y2="789.5" stroke="#ffffff" stroke-opacity="0.33" stroke-width="1"/>
<line x1="1575.5" x2="1575.5" y1="442.5" y2="789.5" stroke="#ffffff" stroke-opacity="0.33" stroke-width="1"/>
<line x1="1629.5" x2="1629.5" y1="442.5" y2="789.5" stroke="#ffffff" stroke-opacity="0.33" stroke-width="1"/>
<line x1="1682.5" x2="1682.5" y1="442.5" y2="789.5" stroke="#ffffff" stroke-opacity="0.33" stroke-width="1"/>
<line x1="1736.5" x2="1736.5" y1="442.5" y2="789.5" stroke="#ffffff" stroke-opacity="0.33" stroke-width="1"/>
<line x1="1790.5" x2="1790.5" y1="442.5" y2="789.5" stroke="#ffffff" stroke-opacity="0.33" stroke-width="1"/>
<line x1="1843.5" x2="1843.5" y1="442.5" y2="789.5" stroke="#ffffff" stroke-opacity="0.33" stroke-width="1"/>
<rect x="1057.5" y="442.5" width="800" height="347" fill="none" stroke="#808080" stroke-width="1"/>
<polyline points="1058.0,734.2 1058.5,728.0 1059.0,721.8 1059.5,714.2 1060.0,706.2 1060.5,701.3 1061.0,698.8 1061.5,700.7 1062.0,711.6 1062.5,722.6 1063.0,734.9 1063.5,747.1 1064.0,740.9 1064.5,732.3 1065.0,733.1 1065.5,738.5 1066.0,740.5 1066.5,717.2 1067.0,713.2 1067.5,708.7 1068.0,704.1 1068.5,698.8 1069.0,693.6 1069.5,690.3 1070.0,687.9 1070.5,685.4 1071.0,682.6 1071.5,679.1 1072.0,674.6 1072.5,665.6 1073.0,656.8 1073.5,647.7 1074.0,637.5 1074.5,626.7 1075.0,615.6 1075.5,604.2 1076.0,592.1 1076.5,584.8 1077.0,597.0 1077.5,608.9 1078.0,620.4 1078.5,631.4 1079.0,641.8 1079.5,651.8 1080.0,661.5 1080.5,670.7 1081.0,678.1 1081.5,683.4 1082.0,688.2 1082.5,692.7 1083.0,697.3 1083.5,701.7 1084.0,702.9 1084.5,702.5 1085.0,702.8 1085.5,711.5 1086.0,715.4 1086.5,726.2 1087.0,735.4 1087.5,738.7 1088.0,742.0 1088.5,737.0 1089.0,732.0 1089.5,731.9 1090.0,733.2 1090.5,737.3 1091.0,743.6 1091.5,743.3 1092.0,729.0 1092.5,716.7 1093.0,721.7 1093.5,726.7 1094.0,723.2 1094.5,718.4 1095.0,715.5 1095.5,713.6 1096.0,713.7 1096.5,716.4 1097.0,705.8 1097.5,707.2 1098.0,708.1 1098.5,706.1 1099.0,702.8 1099.5,697.4 1100.0,691.6 1100.5,696.4 1101.0,701.3 1101.5,705.0 1102.0,708.4 1102.5,711.2 1103.0,709.2 1103.5,718.6 1104.0,717.9 1104.5,718.0 1105.0,721.2 1105.5,725.9 1106.0,726.3 1106.5,721.0 1107.0,716.9 1107.5,717.3 1108.0,717.7 1108.5,727.2 1109.0,736.8 1109.5,733.3 1110.0,725.7 1110.5,723.0 1111.0,724.5 1111.5,724.5 1112.0,721.4 1112.5,721.0 1113.0,730.1 1113.5,740.7 1114.0,750.7 1114.5,760.3 1115.0,767.7 1115.5,771.6 1116.0,771.2 1116.5,768.2 1117.0,764.3 1117.5,751.8 1118.0,734.4 1118.5,725.5 1119.0,719.0 1119.5,724.0 1120.0,734.1 1120.5,742.0 1121.0,747.7 1121.5,749.0 1122.0,740.4 1122.5,732.4 1123.0,729.3 1123.5,726.3 1124.0,723.0 1124.5,719.7 1125.0,725.6 1125.5,736.4 1126.0,741.4 1126.5,738.4 1127.0,734.5 1127.5,727.2 1128.0,720.0 1128.5,723.9 1129.0,728.0 1129.5,727.7 1130.0,725.9 1130.5,729.6 1131.0,738.2 1131.5,741.4 1132.0,732.7 1132.5,725.3 1133.0,730.4 1133.5,735.5 1134.0,730.1 1134.5,723.2 1135.0,727.1 1135.5,736.9 1136.0,737.7 1136.5,726.2 1137.0,717.1 1137.5,717.4 1138.0,717.8 1138.5,721.8 1139.0,725.8 1139.5,722.5 1140.0,716.8 1140.5,716.5 1141.0,720.7 1141.5,727.1 1142.0,738.2 1142.5,747.0 1143.0,731.0 1143.5,715.0 1144.0,711.2 1144.5,709.4 1145.0,712.1 1145.5,717.4 1146.0,723.9 1146.5,732.1 1147.0,738.9 1147.5,739.3 1148.0,742.1 1148.5,745.4 1149.0,753.2 1149.5,766.4 1150.0,777.7 1150.5,783.5 1151.0,782.8 1151.5,776.3 1152.0,769.0 1152.5,764.3 1153.0,756.5 1153.5,750.1 1154.0,742.1 1154.5,734.6 1155.0,727.1 1155.5,719.7 1156.0,717.3 1156.5,721.6 1157.0,724.9 1157.5,723.9 1158.0,722.8 1158.5,720.1 1159.0,717.3 1159.5,719.8 1160.0,724.0 1160.5,729.0 1161.0,734.7 1161.5,737.1 1162.0,732.4 1162.5,727.2 1163.0,717.7 1163.5,708.2 1164.0,713.4 1164.5,721.1 1165.0,725.0 1165.5,726.9 1166.0,730.5 1166.5,736.4 1167.0,741.1 1167.5,740.4 1168.0,739.7 1168.5,738.3 1169.0,736.9 1169.5,734.8 1170.0,732.4 1170.5,728.0 1171.0,721.7 1171.5,720.4 1172.0,730.8 1172.5,739.8 1173.0,734.2 1173.5,728.6 1174.0,729.6 1174.5,731.6 1175.0,734.0 1175.5,736.4 1176.0,737.4 1176.5,736.2 1177.0,735.5 1177.5,736.7 1178.0,737.8 1178.5,732.3 1179.0,726.5 1179.5,727.5 1180.0,730.9 1180.5,735.5 1181.0,741.2 1181.5,741.8 1182.0,730.7 1182.5,720.2 1183.0,718.4 1183.5,716.5 1184.0,724.6 1184.5,734.4 1185.0,736.9 1185.5,735.2 1186.0,730.5 1186.5,721.6 1187.0,715.1 1187.5,719.1 1188.0,723.2 1188.5,725.0 1189.0,726.8 1189.5,706.7 1190.0,700.8 1190.5,696.5 1191.0,693.4 1191.5,684.2 1192.0,671.6 1192.5,657.9 1193.0,671.9 1193.5,684.8 1194.0,695.7 1194.5,701.3 1195.0,704.5 1195.5,705.7 1196.0,719.9 1196.5,706.7 1197.0,705.7 1197.5,704.9 1198.0,703.7 1198.5,701.6 1199.0,696.1 1199.5,687.2 1200.0,693.0 1200.5,696.9 1201.0,697.7 1201.5,699.5 1202.0,708.8 1202.5,716.8 1203.0,729.1 1203.5,718.6 1204.0,718.6 1204.5,720.4 1205.0,723.5 1205.5,727.4 1206.0,729.2 1206.5,728.0 1207.0,727.2 1207.5,728.6 1208.0,729.9 1208.5,736.2 1209.0,742.6 1209.5,743.0 1210.0,741.2 1210.5,737.0 1211.0,730.4 1211.5,725.2 1212.0,723.4 1212.5,721.7 1213.0,721.9 1213.5,722.1 1214.0,722.1 1214.5,721.9 1215.0,717.8 1215.5,711.4 1216.0,707.2 1216.5,706.2 1217.0,706.2 1217.5,710.4 1218.0,714.5 1218.5,714.3 1219.0,713.8 1219.5,714.7 1220.0,716.1 1220.5,719.8 1221.0,725.7 1221.5,728.2 1222.0,722.4 1222.5,717.0 1223.0,718.6 1223.5,720.2 1224.0,721.2 1224.5,722.2 1225.0,717.5 1225.5,709.2 1226.0,704.7 1226.5,705.9 1227.0,708.3 1227.5,716.9 1228.0,725.4 1228.5,722.7 1229.0,719.4 1229.5,715.9 1230.0,712.4 1230.5,712.0 1231.0,714.4 1231.5,715.5 1232.0,713.0 1232.5,711.0 1233.0,715.7 1233.5,710.3 1234.0,711.7 1234.5,711.7 1235.0,706.3 1235.5,698.3 1236.0,690.7 1236.5,683.5 1237.0,681.6 1237.5,683.8 1238.0,685.5 1238.5,686.4 1239.0,687.1 1239.5,685.6 1240.0,682.9 1240.5,682.0 1241.0,682.8 1241.5,683.6 1242.0,684.6 1242.5,685.2 1243.0,684.6 1243.5,681.6 1244.0,677.0 1244.5,671.9 1245.0,668.0 1245.5,664.4 1246.0,660.5 1246.5,656.7 1247.0,652.6 1247.5,649.2 1248.0,645.8 1248.5,642.4 1249.0,639.0 1249.5,636.0 1250.0,627.6 1250.5,617.6 1251.0,607.4 1251.5,596.5 1252.0,585.7 1252.5,577.2 1253.0,572.3 1253.5,567.3 1254.0,562.4 1254.5,557.4 1255.0,569.9 1255.5,583.0 1256.0,599.0 1256.5,613.1 1257.0,625.8 1257.5,638.4 1258.0,650.7 1258.5,650.6 1259.0,650.2 1259.5,651.3 1260.0,652.9 1260.5,657.3 1261.0,661.8 1261.5,666.1 1262.0,670.4 1262.5,669.0 1263.0,666.7 1263.5,664.4 1264.0,663.3 1264.5,662.3 1265.0,662.0 1265.5,661.1 1266.0,657.3 1266.5,653.0 1267.0,648.4 1267.5,643.2 1268.0,637.7 1268.5,635.7 1269.0,647.4 1269.5,659.3 1270.0,672.7 1270.5,685.7 1271.0,692.0 1271.5,695.3 1272.0,694.2 1272.5,691.7 1273.0,697.3 1273.5,702.8 1274.0,707.2 1274.5,711.0 1275.0,721.0 1275.5,714.1 1276.0,714.5 1276.5,726.4 1277.0,736.7 1277.5,738.5 1278.0,740.3 1278.5,735.2 1279.0,729.7 1279.5,727.1 1280.0,725.8 1280.5,723.4 1281.0,720.1 1281.5,716.6 1282.0,712.8 1282.5,709.6 1283.0,717.7 1283.5,725.7 1284.0,723.8 1284.5,719.7 1285.0,722.8 1285.5,730.7 1286.0,733.5 1286.5,728.1 1287.0,723.4 1287.5,707.1 1288.0,704.2 1288.5,703.1 1289.0,701.5 1289.5,695.4 1290.0,686.3 1290.5,675.8 1291.0,681.2 1291.5,690.9 1292.0,704.0 1292.5,712.0 1293.0,715.0 1293.5,717.2 1294.0,718.8 1294.5,737.7 1295.0,735.5 1295.5,734.3 1296.0,734.3 1296.5,736.3 1297.0,737.7 1297.5,736.7 1298.0,735.8 1298.5,729.5 1299.0,722.9 1299.5,723.2 1300.0,726.3 1300.5,731.4 1301.0,738.7 1301.5,744.7 1302.0,747.2 1302.5,749.2 1303.0,741.6 1303.5,734.0 1304.0,730.5 1304.5,727.9 1305.0,734.4 1305.5,747.0 1306.0,750.3 1306.5,738.3 1307.0,727.8 1307.5,726.0 1308.0,724.2 1308.5,727.6 1309.0,731.3 1309.5,731.7 1310.0,730.7 1310.5,726.7 1311.0,719.6 1311.5,717.4 1312.0,728.8 1312.5,739.6 1313.0,736.2 1313.5,732.9 1314.0,729.1 1314.5,725.3 1315.0,725.0 1315.5,727.3 1316.0,709.7 1316.5,706.2 1317.0,702.8 1317.5,700.7 1318.0,693.1 1318.5,682.4 1319.0,670.6 1319.5,681.7 1320.0,689.8 1320.5,696.2 1321.0,700.8 1321.5,704.5 1322.0,705.7 1322.5,719.1 1323.0,729.1 1323.5,739.1 1324.0,737.9 1324.5,734.1 1325.0,728.7 1325.5,722.1 1326.0,716.7 1326.5,713.4 1327.0,711.6 1327.5,719.0 1328.0,726.4 1328.5,726.6 1329.0,726.4 1329.5,727.3 1330.0,729.3 1330.5,734.0 1331.0,741.1 1331.5,746.6 1332.0,749.7 1332.5,754.5 1333.0,757.0 1333.5,753.8 1334.0,746.8 1334.5,741.4 1335.0,739.2 1335.5,740.2 1336.0,740.5 1336.5,735.9 1337.0,731.8 1337.5,729.2 1338.0,726.8 1338.5,732.4 1339.0,738.7 1339.5,737.5 1340.0,733.0 1340.5,729.0 1341.0,725.5 1341.5,723.8 1342.0,727.7 1342.5,731.2 1343.0,725.2 1343.5,719.3 1344.0,720.0 1344.5,722.2 1345.0,728.9 1345.5,738.7 1346.0,744.3 1346.5,742.7 1347.0,740.1 1347.5,731.8 1348.0,723.6 1348.5,728.0 1349.0,733.6 1349.5,734.6 1350.0,733.6 1350.5,728.9 1351.0,720.1 1351.5,714.6 1352.0,705.4 1352.5,706.3 1353.0,702.6 1353.5,698.9 1354.0,697.1 1354.5,693.6 1355.0,687.9 1355.5,694.2 1356.0,699.2 1356.5,700.6 1357.0,700.5 1357.5,702.7 1358.0,704.9 1358.5,721.4 1359.0,724.8 1359.5,722.4 1360.0,717.3 1360.5,716.4 1361.0,720.3 1361.5,723.8 1362.0,726.2 1362.5,728.4 1363.0,725.1 1363.5,721.8 1364.0,726.6 1364.5,733.3 1365.0,738.0 1365.5,741.3 1366.0,740.7 1366.5,733.3 1367.0,728.0 1367.5,735.4 1368.0,742.8 1368.5,743.4 1369.0,743.4 1369.5,737.7 1370.0,729.5 1370.5,721.6 1371.0,714.0 1371.5,708.9 1372.0,711.6 1372.5,714.5 1373.0,725.2 1373.5,736.0 1374.0,734.8 1374.5,730.7 1375.0,728.9 1375.5,728.7 1376.0,727.0 1376.5,722.6 1377.0,720.6 1377.5,734.1 1378.0,747.6 1378.5,744.1 1379.0,738.9 1379.5,732.5 1380.0,725.5 1380.5,720.5 1381.0,717.6 1381.5,716.7 1382.0,721.7 1382.5,726.5 1383.0,721.1 1383.5,715.7 1384.0,719.8 1384.5,726.2 1385.0,730.4 1385.5,732.9 1386.0,734.7 1386.5,735.3 1387.0,735.9 1387.5,737.4 1388.0,738.9 1388.5,745.4 1389.0,752.3 1389.5,748.9 1390.0,740.6 1390.5,734.9 1391.0,732.0 1391.5,729.5 1392.0,728.2 1392.5,727.0 1393.0,732.4 1393.5,737.7 1394.0,739.3 1394.5,740.0 1395.0,738.6 1395.5,735.5 1396.0,732.1 1396.5,728.3 1397.0,724.6 1397.5,722.0 1398.0,719.4 1398.5,720.5 1399.0,722.0 1399.5,727.5 1400.0,734.7 1400.5,734.6 1401.0,726.1 1401.5,719.1 1402.0,717.3 1402.5,715.5 1403.0,715.0 1403.5,714.4 1404.0,718.5 1404.5,723.7 1405.0,728.0 1405.5,731.4 1406.0,733.7 1406.5,734.2 1407.0,733.9 1407.5,728.9 1408.0,723.9 1408.5,725.6 1409.0,728.0 1409.5,728.4 1410.0,727.8 1410.5,729.4 1411.0,733.7 1411.5,738.3 1412.0,744.0 1412.5,749.6 1413.0,751.6 1413.5,753.5 1414.0,745.9 1414.5,735.8 1415.0,730.1 1415.5,727.9 1416.0,725.3 1416.5,722.3 1417.0,720.7 1417.5,728.9 1418.0,737.1 1418.5,741.1 1419.0,744.8 1419.5,738.8 1420.0,728.4 1420.5,722.9 1421.0,723.6 1421.5,726.3 1422.0,735.8 1422.5,745.1 1423.0,742.0 1423.5,739.0 1424.0,738.1 1424.5,737.8 1425.0,737.7 1425.5,737.6 1426.0,738.9 1426.5,742.8 1427.0,746.2 1427.5,745.8 1428.0,745.3 1428.5,742.7 1429.0,739.7 1429.5,715.1 1430.0,710.2 1430.5,705.9 1431.0,702.4 1431.5,695.1 1432.0,682.2 1432.5,669.1 1433.0,670.5 1433.5,679.2 1434.0,689.3 1434.5,696.8 1435.0,702.4 1435.5,707.1 1436.0,712.5 1436.5,737.1 1437.0,742.0 1437.5,732.1 1438.0,722.2 1438.5,727.4 1439.0,734.3 1439.5,741.4 1440.0,748.6 1440.5,750.0 1441.0,744.2 1441.5,738.5 1442.0,732.7 1442.5,726.8 1443.0,722.0 1443.5,717.2 1444.0,721.9 1444.5,729.3 1445.0,733.6 1445.5,735.4 1446.0,735.7 1446.5,732.9 1447.0,729.4 1447.5,720.2 1448.0,711.0 1448.5,714.2 1449.0,718.8 1449.5,723.4 1450.0,728.0 1450.5,731.8 1451.0,734.7 1451.5,735.6 1452.0,729.2 1452.5,722.9 1453.0,722.0 1453.5,721.2 1454.0,724.0 1454.5,727.9 1455.0,730.6 1455.5,732.9 1456.0,736.6 1456.5,741.9 1457.0,748.0 1457.5,753.1 1458.0,755.0 1458.5,753.4 1459.0,750.2 1459.5,747.8 1460.0,747.6 1460.5,746.8 1461.0,743.4 1461.5,740.6 1462.0,738.8 1462.5,737.1 1463.0,741.6 1463.5,746.2 1464.0,736.9 1464.5,723.6 1465.0,721.7 1465.5,728.9 1466.0,731.4 1466.5,724.1 1467.0,717.9 1467.5,720.7 1468.0,723.6 1468.5,727.7 1469.0,731.9 1469.5,732.1 1470.0,730.1 1470.5,728.9 1471.0,728.6 1471.5,726.9 1472.0,720.0 1472.5,713.1 1473.0,716.9 1473.5,720.7 1474.0,722.6 1474.5,723.8 1475.0,728.8 1475.5,736.7 1476.0,740.9 1476.5,737.8 1477.0,735.5 1477.5,741.1 1478.0,746.6 1478.5,739.2 1479.0,730.1 1479.5,727.7 1480.0,728.8 1480.5,729.1 1481.0,728.6 1481.5,729.0 1482.0,733.1 1482.5,737.1 1483.0,729.2 1483.5,721.2 1484.0,723.9 1484.5,729.9 1485.0,732.3 1485.5,731.6 1486.0,727.1 1486.5,714.5 1487.0,704.0 1487.5,711.8 1488.0,719.7 1488.5,725.7 1489.0,731.5 1489.5,733.8 1490.0,734.2 1490.5,735.8 1491.0,738.9 1491.5,743.2 1492.0,752.3 1492.5,761.4 1493.0,745.8 1493.5,730.0 1494.0,723.0 1494.5,718.6 1495.0,718.1 1495.5,720.7 1496.0,721.7 1496.5,703.6 1497.0,698.9 1497.5,698.0 1498.0,694.3 1498.5,678.9 1499.0,660.0 1499.5,639.8 1500.0,659.1 1500.5,676.2 1501.0,688.4 1501.5,691.5 1502.0,694.3 1502.5,696.0 1503.0,720.4 1503.5,733.5 1504.0,731.9 1504.5,725.7 1505.0,721.8 1505.5,719.9 1506.0,718.6 1506.5,718.9 1507.0,719.0 1507.5,716.9 1508.0,714.9 1508.5,715.3 1509.0,716.2 1509.5,716.1 1510.0,715.6 1510.5,720.2 1511.0,731.7 1511.5,741.0 1512.0,741.4 1512.5,741.8 1513.0,723.7 1513.5,706.2 1514.0,707.1 1514.5,715.4 1515.0,726.3 1515.5,738.9 1516.0,749.8 1516.5,757.6 1517.0,761.0 1517.5,757.8 1518.0,751.2 1518.5,745.2 1519.0,742.4 1519.5,734.6 1520.0,722.6 1520.5,718.2 1521.0,724.4 1521.5,729.9 1522.0,710.7 1522.5,708.8 1523.0,704.1 1523.5,698.3 1524.0,693.4 1524.5,687.9 1525.0,694.4 1525.5,704.5 1526.0,712.5 1526.5,715.2 1527.0,717.3 1527.5,714.6 1528.0,723.8 1528.5,715.9 1529.0,708.6 1529.5,709.2 1530.0,714.0 1530.5,719.0 1531.0,724.5 1531.5,727.8 1532.0,722.2 1532.5,716.5 1533.0,718.6 1533.5,720.8 1534.0,723.4 1534.5,726.1 1535.0,724.9 1535.5,720.1 1536.0,716.3 1536.5,714.9 1537.0,713.8 1537.5,715.7 1538.0,717.7 1538.5,721.3 1539.0,725.3 1539.5,730.2 1540.0,735.8 1540.5,737.6 1541.0,734.0 1541.5,729.4 1542.0,721.1 1542.5,712.7 1543.0,714.7 1543.5,716.8 1544.0,719.2 1544.5,721.6 1545.0,723.1 1545.5,723.9 1546.0,727.7 1546.5,738.3 1547.0,747.9 1547.5,746.6 1548.0,745.3 1548.5,741.4 1549.0,737.0 1549.5,738.9 1550.0,744.4 1550.5,746.5 1551.0,743.8 1551.5,739.3 1552.0,727.3 1552.5,715.3 1553.0,721.9 1553.5,729.1 1554.0,729.1 1554.5,726.8 1555.0,727.7 1555.5,731.4 1556.0,734.8 1556.5,737.4 1557.0,739.4 1557.5,733.9 1558.0,728.5 1558.5,734.7 1559.0,742.7 1559.5,745.4 1560.0,745.1 1560.5,746.1 1561.0,749.0 1561.5,749.4 1562.0,739.7 1562.5,730.0 1563.0,722.3 1563.5,714.7 1564.0,717.6 1564.5,724.0 1565.0,733.8 1565.5,746.7 1566.0,756.3 1566.5,758.5 1567.0,759.7 1567.5,750.2 1568.0,740.7 1568.5,729.9 1569.0,718.9 1569.5,717.7 1570.0,722.2 1570.5,730.0 1571.0,742.6 1571.5,752.5 1572.0,750.6 1572.5,748.7 1573.0,746.8 1573.5,744.8 1574.0,734.2 1574.5,720.6 1575.0,713.1 1575.5,711.1 1576.0,702.0 1576.5,708.6 1577.0,712.3 1577.5,711.8 1578.0,708.2 1578.5,697.7 1579.0,686.3 1579.5,693.1 1580.0,702.5 1580.5,708.4 1581.0,709.9 1581.5,710.8 1582.0,711.3 1582.5,725.9 1583.0,728.2 1583.5,730.7 1584.0,732.3 1584.5,733.5 1585.0,735.3 1585.5,737.6 1586.0,738.8 1586.5,737.6 1587.0,737.0 1587.5,744.1 1588.0,751.1 1588.5,754.9 1589.0,758.1 1589.5,753.8 1590.0,745.1 1590.5,736.1 1591.0,726.7 1591.5,719.1 1592.0,704.8 1592.5,703.2 1593.0,705.6 1593.5,706.9 1594.0,702.6 1594.5,696.4 1595.0,694.6 1595.5,699.9 1596.0,704.3 1596.5,707.1 1597.0,709.8 1597.5,715.1 1598.0,742.1 1598.5,743.4 1599.0,745.1 1599.5,749.2 1600.0,753.7 1600.5,756.6 1601.0,758.0 1601.5,755.6 1602.0,750.9 1602.5,746.9 1603.0,747.1 1603.5,750.7 1604.0,746.9 1604.5,739.6 1605.0,734.8 1605.5,732.5 1606.0,731.0 1606.5,731.3 1607.0,731.7 1607.5,734.4 1608.0,737.0 1608.5,737.9 1609.0,738.5 1609.5,741.2 1610.0,745.2 1610.5,747.0 1611.0,745.5 1611.5,744.6 1612.0,746.5 1612.5,748.4 1613.0,742.9 1613.5,737.0 1614.0,734.5 1614.5,733.2 1615.0,736.5 1615.5,744.0 1616.0,748.0 1616.5,743.3 1617.0,738.6 1617.5,734.4 1618.0,730.2 1618.5,736.0 1619.0,743.7 1619.5,745.4 1620.0,743.4 1620.5,741.5 1621.0,739.8 1621.5,737.6 1622.0,733.9 1622.5,730.1 1623.0,729.6 1623.5,729.2 1624.0,728.8 1624.5,728.3 1625.0,733.6 1625.5,744.4 1626.0,750.7 1626.5,745.6 1627.0,740.8 1627.5,739.4 1628.0,738.0 1628.5,743.2 1629.0,749.6 1629.5,756.2 1630.0,762.9 1630.5,761.4 1631.0,747.5 1631.5,735.2 1632.0,730.4 1632.5,725.6 1633.0,729.6 1633.5,734.1 1634.0,737.2 1634.5,740.0 1635.0,742.6 1635.5,745.1 1636.0,744.3 1636.5,735.3 1637.0,726.8 1637.5,724.0 1638.0,721.3 1638.5,723.8 1639.0,727.3 1639.5,731.7 1640.0,736.6 1640.5,741.3 1641.0,745.7 1641.5,749.8 1642.0,753.0 1642.5,756.2 1643.0,750.4 1643.5,744.2 1644.0,738.6 1644.5,733.2 1645.0,732.1 1645.5,735.2 1646.0,736.4 1646.5,732.9 1647.0,729.4 1647.5,727.4 1648.0,725.3 1648.5,726.6 1649.0,728.5 1649.5,727.4 1650.0,724.2 1650.5,724.9 1651.0,731.4 1651.5,736.6 1652.0,734.5 1652.5,732.4 1653.0,727.5 1653.5,722.4 1654.0,722.1 1654.5,723.6 1655.0,727.4 1655.5,733.5 1656.0,739.8 1656.5,746.5 1657.0,752.8 1657.5,751.0 1658.0,749.2 1658.5,747.8 1659.0,746.5 1659.5,745.0 1660.0,743.2 1660.5,742.0 1661.0,741.7 1661.5,741.2 1662.0,739.7 1662.5,738.3 1663.0,743.2 1663.5,748.8 1664.0,745.9 1664.5,741.9 1665.0,748.7 1665.5,761.0 1666.0,768.0 1666.5,770.4 1667.0,771.0 1667.5,769.8 1668.0,763.6 1668.5,755.5 1669.0,747.8 1669.5,744.8 1670.0,746.9 1670.5,747.6 1671.0,743.3 1671.5,739.1 1672.0,734.6 1672.5,730.2 1673.0,726.0 1673.5,721.9 1674.0,724.4 1674.5,729.5 1675.0,732.4 1675.5,733.3 1676.0,735.1 1676.5,737.8 1677.0,743.3 1677.5,753.5 1678.0,762.4 1678.5,767.9 1679.0,770.0 1679.5,767.7 1680.0,760.2 1680.5,751.0 1681.0,748.8 1681.5,749.8 1682.0,742.6 1682.5,736.0 1683.0,729.2 1683.5,722.7 1684.0,725.9 1684.5,732.9 1685.0,735.2 1685.5,732.7 1686.0,731.1 1686.5,732.1 1687.0,733.3 1687.5,738.4 1688.0,743.6 1688.5,739.9 1689.0,734.5 1689.5,728.5 1690.0,722.1 1690.5,718.9 1691.0,721.0 1691.5,723.8 1692.0,730.9 1692.5,737.9 1693.0,736.1 1693.5,733.6 1694.0,733.6 1694.5,734.7 1695.0,733.6 1695.5,730.2 1696.0,725.8 1696.5,718.7 1697.0,712.3 1697.5,720.7 1698.0,729.2 1698.5,728.4 1699.0,725.6 1699.5,728.3 1700.0,734.9 1700.5,738.3 1701.0,736.6 1701.5,733.7 1702.0,724.7 1702.5,715.7 1703.0,720.6 1703.5,726.6 1704.0,729.6 1704.5,731.3 1705.0,736.4 1705.5,745.2 1706.0,748.9 1706.5,738.6 1707.0,728.8 1707.5,732.5 1708.0,736.1 1708.5,735.5 1709.0,733.9 1709.5,735.7 1710.0,739.7 1710.5,742.4 1711.0,742.7 1711.5,741.7 1712.0,732.7 1712.5,723.8 1713.0,728.2 1713.5,733.5 1714.0,734.3 1714.5,733.3 1715.0,712.1 1715.5,707.5 1716.0,704.0 1716.5,703.3 1717.0,700.9 1717.5,697.1 1718.0,691.7 1718.5,700.6 1719.0,709.6 1719.5,714.2 1720.0,713.9 1720.5,713.9 1721.0,716.1 1721.5,738.3 1722.0,739.6 1722.5,740.9 1723.0,743.9 1723.5,747.0 1724.0,745.7 1724.5,742.7 1725.0,744.7 1725.5,752.1 1726.0,755.9 1726.5,749.4 1727.0,743.0 1727.5,737.7 1728.0,732.3 1728.5,730.7 1729.0,729.9 1729.5,727.5 1730.0,723.9 1730.5,721.2 1731.0,720.0 1731.5,719.2 1732.0,721.0 1732.5,722.8 1733.0,722.9 1733.5,722.8 1734.0,722.5 1734.5,722.1 1735.0,723.5 1735.5,726.7 1736.0,729.7 1736.5,731.6 1737.0,733.6 1737.5,739.7 1738.0,745.8 1738.5,742.2 1739.0,736.2 1739.5,735.5 1740.0,738.5 1740.5,738.3 1741.0,732.6 1741.5,727.4 1742.0,725.8 1742.5,724.1 1743.0,728.9 1743.5,734.1 1744.0,738.9 1744.5,743.4 1745.0,746.0 1745.5,746.4 1746.0,745.4 1746.5,740.3 1747.0,735.2 1747.5,731.0 1748.0,726.7 1748.5,730.4 1749.0,735.9 1749.5,735.6 1750.0,731.0 1750.5,729.3 1751.0,732.5 1751.5,735.8 1752.0,739.1 1752.5,742.4 1753.0,742.1 1753.5,741.5 1754.0,735.1 1754.5,726.1 1755.0,721.6 1755.5,722.1 1756.0,722.7 1756.5,723.6 1757.0,724.5 1757.5,721.2 1758.0,718.0 1758.5,721.3 1759.0,708.0 1759.5,703.7 1760.0,697.0 1760.5,692.3 1761.0,684.0 1761.5,671.3 1762.0,656.2 1762.5,672.2 1763.0,687.1 1763.5,699.6 1764.0,704.0 1764.5,707.1 1765.0,711.0 1765.5,736.1 1766.0,738.4 1766.5,735.2 1767.0,732.1 1767.5,732.4 1768.0,732.7 1768.5,735.4 1769.0,738.7 1769.5,735.8 1770.0,728.4 1770.5,728.0 1771.0,740.2 1771.5,750.9 1772.0,751.6 1772.5,752.3 1773.0,746.5 1773.5,740.0 1774.0,733.6 1774.5,727.3 1775.0,722.5 1775.5,719.6 1776.0,719.0 1776.5,725.7 1777.0,732.6 1777.5,738.5 1778.0,745.0 1778.5,750.0 1779.0,755.1 1779.5,757.7 1780.0,760.9 1780.5,765.8 1781.0,768.0 1781.5,765.8 1782.0,759.7 1782.5,750.9 1783.0,741.5 1783.5,733.1 1784.0,731.2 1784.5,734.2 1785.0,737.7 1785.5,740.4 1786.0,741.7 1786.5,737.8 1787.0,734.0 1787.5,735.1 1788.0,736.3 1788.5,735.3 1789.0,733.7 1789.5,731.7 1790.0,729.6 1790.5,727.6 1791.0,726.0 1791.5,725.0 1792.0,728.1 1792.5,731.3 1793.0,725.4 1793.5,718.7 1794.0,714.9 1794.5,712.6 1795.0,713.4 1795.5,717.7 1796.0,722.3 1796.5,727.9 1797.0,733.4 1797.5,735.4 1798.0,737.3 1798.5,729.2 1799.0,718.4 1799.5,709.5 1800.0,701.9 1800.5,699.6 1801.0,707.1 1801.5,713.7 1802.0,713.2 1802.5,712.8 1803.0,716.3 1803.5,705.9 1804.0,706.1 1804.5,705.6 1805.0,704.0 1805.5,699.7 1806.0,696.0 1806.5,697.0 1807.0,706.2 1807.5,714.2 1808.0,723.7 1808.5,736.8 1809.0,750.6 1809.5,762.3 1810.0,765.0 1810.5,762.2 1811.0,754.9 1811.5,745.6 1812.0,737.2 1812.5,731.2 1813.0,721.4 1813.5,712.2 1814.0,708.0 1814.5,706.3 1815.0,707.8 1815.5,712.9 1816.0,718.5 1816.5,726.0 1817.0,733.3 1817.5,729.2 1818.0,725.2 1818.5,720.9 1819.0,716.7 1819.5,714.3 1820.0,713.4 1820.5,715.0 1821.0,721.4 1821.5,727.0 1822.0,727.2 1822.5,727.4 1823.0,731.5 1823.5,736.1 1824.0,737.4 1824.5,737.1 1825.0,734.1 1825.5,727.6 1826.0,721.0 1826.5,713.9 1827.0,706.9 1827.5,706.9 1828.0,706.9 1828.5,710.7 1829.0,715.6 1829.5,722.3 1830.0,730.6 1830.5,734.4 1831.0,729.8 1831.5,725.9 1832.0,727.2 1832.5,728.5 1833.0,723.9 1833.5,718.7 1834.0,713.3 1834.5,707.7 1835.0,706.5 1835.5,710.4 1836.0,714.7 1836.5,720.2 1837.0,725.6 1837.5,724.0 1838.0,722.3 1838.5,718.2 1839.0,713.3 1839.5,713.5 1840.0,717.6 1840.5,721.1 1841.0,723.5 1841.5,726.5 1842.0,734.3 1842.5,742.1 1843.0,744.0 1843.5,745.2 1844.0,743.0 1844.5,739.2 1845.0,712.9 1845.5,707.6 1846.0,701.6 1846.5,694.1 1847.0,680.2 1847.5,665.9 1848.0,649.5 1848.5,667.1 1849.0,684.4 1849.5,699.0 1850.0,705.0 1850.5,709.6 1851.0,711.3 1851.5,726.0 1852.0,722.0 1852.5,718.0 1853.0,717.9 1853.5,718.3 1854.0,725.6 1854.5,736.4 1855.0,741.5 1855.5,739.7 1856.0,737.9 1856.5,736.0 1857.0,734.1 1857.5,734.1" fill="none" stroke="#d4d4d4" stroke-width="0.92" stroke-linejoin="round"/>
<circle cx="1076" cy="590.8" r="3.9" fill="#ee1111"/>
<circle cx="1254.8" cy="554.2" r="3.9" fill="#ffee22"/>
<circle cx="1268.8" cy="642.4" r="3.9" fill="#2299dd"/>
<circle cx="1431.7" cy="686.2" r="3.9" fill="#7a2cd8"/>
</svg>
<span style="right:818.4000000000001px;top:434.20px;font-size:13.3px;line-height:17px;color:#fff;">-10.0</span>
<span style="right:818.4000000000001px;top:503.58px;font-size:13.3px;line-height:17px;color:#fff;">-20.0</span>
<span style="right:818.4000000000001px;top:572.96px;font-size:13.3px;line-height:17px;color:#fff;">-30.0</span>
<span style="right:818.4000000000001px;top:642.34px;font-size:13.3px;line-height:17px;color:#fff;">-40.0</span>
<span style="right:818.4000000000001px;top:711.72px;font-size:13.3px;line-height:17px;color:#fff;">-50.0</span>
<span style="right:818.4000000000001px;top:781.10px;font-size:13.3px;line-height:17px;color:#fff;">-60.0</span>
<span style="left:943.8100000000002px;width:300px;text-align:center;top:794.60px;font-size:13.3px;line-height:17px;color:#fff;">-60</span>
<span style="left:997.3400000000001px;width:300px;text-align:center;top:794.60px;font-size:13.3px;line-height:17px;color:#fff;">-40</span>
<span style="left:1050.8700000000001px;width:300px;text-align:center;top:794.60px;font-size:13.3px;line-height:17px;color:#fff;">-20</span>
<span style="left:1104.7px;width:300px;text-align:center;top:794.60px;font-size:13.3px;line-height:17px;color:#fff;">0</span>
<span style="left:1158.23px;width:300px;text-align:center;top:794.60px;font-size:13.3px;line-height:17px;color:#fff;">20</span>
<span style="left:1211.76px;width:300px;text-align:center;top:794.60px;font-size:13.3px;line-height:17px;color:#fff;">40</span>
<span style="left:1265.29px;width:300px;text-align:center;top:794.60px;font-size:13.3px;line-height:17px;color:#fff;">60</span>
<span style="left:1318.8200000000002px;width:300px;text-align:center;top:794.60px;font-size:13.3px;line-height:17px;color:#fff;">80</span>
<span style="left:1372.35px;width:300px;text-align:center;top:794.60px;font-size:13.3px;line-height:17px;color:#fff;">100</span>
<span style="left:1425.88px;width:300px;text-align:center;top:794.60px;font-size:13.3px;line-height:17px;color:#fff;">120</span>
<span style="left:1479.41px;width:300px;text-align:center;top:794.60px;font-size:13.3px;line-height:17px;color:#fff;">140</span>
<span style="left:1532.94px;width:300px;text-align:center;top:794.60px;font-size:13.3px;line-height:17px;color:#fff;">160</span>
<span style="left:1586.47px;width:300px;text-align:center;top:794.60px;font-size:13.3px;line-height:17px;color:#fff;">180</span>
<span style="left:1640.0px;width:300px;text-align:center;top:794.60px;font-size:13.3px;line-height:17px;color:#fff;">200</span>
<span style="left:1693.53px;width:300px;text-align:center;top:794.60px;font-size:13.3px;line-height:17px;color:#fff;">220</span>
<span style="left:1307px;width:300px;text-align:center;top:816.00px;font-size:13.5px;line-height:18px;color:#fff;">Distance Difference (km)</span>
</div></body></html>
